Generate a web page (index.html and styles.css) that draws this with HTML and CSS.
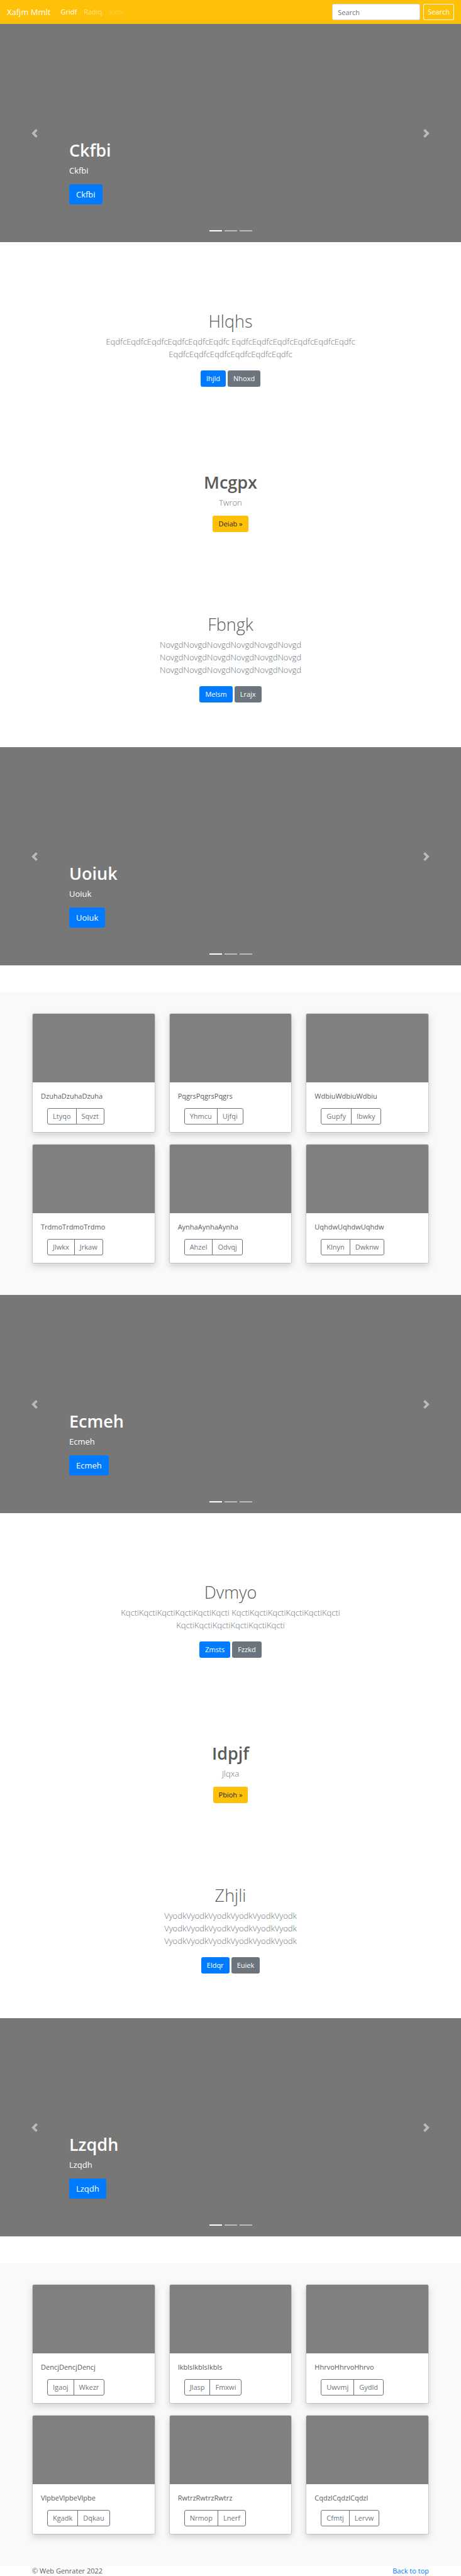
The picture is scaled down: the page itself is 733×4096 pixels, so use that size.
FILE: index.html
```html
<!DOCTYPE html>
<html lang="en">
<head>
<meta charset="utf-8">
<meta name="viewport" content="width=device-width, initial-scale=1">
<title>Xafjm Mmlt</title>
<link rel="stylesheet" href="styles.css">
</head>
<body id="top">
<header class="navbar">
  <a class="brand" href="#">Xafjm Mmlt</a>
  <nav class="nav-links">
    <a class="nav-link active" href="#">Gridf</a>
    <a class="nav-link" href="#">Radlq</a>
    <a class="nav-link disabled" href="#">Xielv</a>
  </nav>
  <form class="search">
    <input class="search-input" type="text" placeholder="Search" aria-label="Search">
    <button class="btn btn-outline-light" type="button">Search</button>
  </form>
</header>
<main>
  <section class="carousel">
    <button class="control prev" type="button" aria-label="Previous"><svg class="chevron" viewBox="0 0 8 8"><path d="M5.25 0l-4 4 4 4 1.5-1.5L4.250 4l2.500-2.500L5.250 0z"/></svg></button>
    <div class="caption"><h1 class="title strong">Ckfbi</h1><p class="caption-text">Ckfbi</p><a class="btn btn-lg btn-primary" href="#">Ckfbi</a></div>
    <button class="control next" type="button" aria-label="Next"><svg class="chevron" viewBox="0 0 8 8"><path d="M2.750 0l-1.500 1.500L3.750 4l-2.500 2.500L2.750 8l4-4-4-4z"/></svg></button>
    <div class="indicators"><span class="dash on"></span><span class="dash"></span><span class="dash"></span></div>
  </section>
  <section class="intro">
    <h2 class="title">Hlqhs</h2>
    <p class="lead">EqdfcEqdfcEqdfcEqdfcEqdfcEqdfc EqdfcEqdfcEqdfcEqdfcEqdfcEqdfc EqdfcEqdfcEqdfcEqdfcEqdfcEqdfc</p>
    <div class="actions"><a class="btn btn-primary" href="#">Ihjld</a><a class="btn btn-secondary" href="#">Nhoxd</a></div>
  </section>
  <section class="feature">
    <h2 class="title strong">Mcgpx</h2>
    <p class="lead">Twron</p>
    <div class="actions"><a class="btn btn-warning" href="#">Deiab »</a></div>
  </section>
  <section class="outro">
    <h2 class="title">Fbngk</h2>
    <p class="lead">NovgdNovgdNovgdNovgdNovgdNovgd<br>NovgdNovgdNovgdNovgdNovgdNovgd<br>NovgdNovgdNovgdNovgdNovgdNovgd</p>
    <div class="actions"><a class="btn btn-primary" href="#">Melsm</a><a class="btn btn-secondary" href="#">Lrajx</a></div>
  </section>
  <section class="carousel">
    <button class="control prev" type="button" aria-label="Previous"><svg class="chevron" viewBox="0 0 8 8"><path d="M5.25 0l-4 4 4 4 1.5-1.5L4.250 4l2.500-2.500L5.250 0z"/></svg></button>
    <div class="caption"><h1 class="title strong">Uoiuk</h1><p class="caption-text">Uoiuk</p><a class="btn btn-lg btn-primary" href="#">Uoiuk</a></div>
    <button class="control next" type="button" aria-label="Next"><svg class="chevron" viewBox="0 0 8 8"><path d="M2.750 0l-1.500 1.500L3.750 4l-2.500 2.500L2.750 8l4-4-4-4z"/></svg></button>
    <div class="indicators"><span class="dash on"></span><span class="dash"></span><span class="dash"></span></div>
  </section>
  <section class="album">
    <article class="card"><div class="thumb"></div><div class="card-body"><p class="card-text">DzuhaDzuhaDzuha</p><div class="group"><button class="btn btn-outline" type="button">Ltyqo</button><button class="btn btn-outline" type="button">Sqvzt</button></div></div></article>
    <article class="card"><div class="thumb"></div><div class="card-body"><p class="card-text">PqgrsPqgrsPqgrs</p><div class="group"><button class="btn btn-outline" type="button">Yhmcu</button><button class="btn btn-outline" type="button">Ujfqi</button></div></div></article>
    <article class="card"><div class="thumb"></div><div class="card-body"><p class="card-text">WdbiuWdbiuWdbiu</p><div class="group"><button class="btn btn-outline" type="button">Gupfy</button><button class="btn btn-outline" type="button">Ibwky</button></div></div></article>
    <article class="card"><div class="thumb"></div><div class="card-body"><p class="card-text">TrdmoTrdmoTrdmo</p><div class="group"><button class="btn btn-outline" type="button">Jlwkx</button><button class="btn btn-outline" type="button">Jrkaw</button></div></div></article>
    <article class="card"><div class="thumb"></div><div class="card-body"><p class="card-text">AynhaAynhaAynha</p><div class="group"><button class="btn btn-outline" type="button">Ahzel</button><button class="btn btn-outline" type="button">Odvqj</button></div></div></article>
    <article class="card"><div class="thumb"></div><div class="card-body"><p class="card-text">UqhdwUqhdwUqhdw</p><div class="group"><button class="btn btn-outline" type="button">Klnyn</button><button class="btn btn-outline" type="button">Dwknw</button></div></div></article>
  </section>
  <section class="carousel">
    <button class="control prev" type="button" aria-label="Previous"><svg class="chevron" viewBox="0 0 8 8"><path d="M5.25 0l-4 4 4 4 1.5-1.5L4.250 4l2.500-2.500L5.250 0z"/></svg></button>
    <div class="caption"><h1 class="title strong">Ecmeh</h1><p class="caption-text">Ecmeh</p><a class="btn btn-lg btn-primary" href="#">Ecmeh</a></div>
    <button class="control next" type="button" aria-label="Next"><svg class="chevron" viewBox="0 0 8 8"><path d="M2.750 0l-1.500 1.500L3.750 4l-2.500 2.500L2.750 8l4-4-4-4z"/></svg></button>
    <div class="indicators"><span class="dash on"></span><span class="dash"></span><span class="dash"></span></div>
  </section>
  <section class="intro">
    <h2 class="title">Dvmyo</h2>
    <p class="lead">KqctiKqctiKqctiKqctiKqctiKqcti KqctiKqctiKqctiKqctiKqctiKqcti KqctiKqctiKqctiKqctiKqctiKqcti</p>
    <div class="actions"><a class="btn btn-primary" href="#">Zmsts</a><a class="btn btn-secondary" href="#">Fzzkd</a></div>
  </section>
  <section class="feature">
    <h2 class="title strong">Idpjf</h2>
    <p class="lead">Jlqxa</p>
    <div class="actions"><a class="btn btn-warning" href="#">Pbioh »</a></div>
  </section>
  <section class="outro">
    <h2 class="title">Zhjli</h2>
    <p class="lead">VyodkVyodkVyodkVyodkVyodkVyodk<br>VyodkVyodkVyodkVyodkVyodkVyodk<br>VyodkVyodkVyodkVyodkVyodkVyodk</p>
    <div class="actions"><a class="btn btn-primary" href="#">Eldqr</a><a class="btn btn-secondary" href="#">Euiek</a></div>
  </section>
  <section class="carousel">
    <button class="control prev" type="button" aria-label="Previous"><svg class="chevron" viewBox="0 0 8 8"><path d="M5.25 0l-4 4 4 4 1.5-1.5L4.250 4l2.500-2.500L5.250 0z"/></svg></button>
    <div class="caption"><h1 class="title strong">Lzqdh</h1><p class="caption-text">Lzqdh</p><a class="btn btn-lg btn-primary" href="#">Lzqdh</a></div>
    <button class="control next" type="button" aria-label="Next"><svg class="chevron" viewBox="0 0 8 8"><path d="M2.750 0l-1.500 1.500L3.750 4l-2.500 2.500L2.750 8l4-4-4-4z"/></svg></button>
    <div class="indicators"><span class="dash on"></span><span class="dash"></span><span class="dash"></span></div>
  </section>
  <section class="album">
    <article class="card"><div class="thumb"></div><div class="card-body"><p class="card-text">DencjDencjDencj</p><div class="group"><button class="btn btn-outline" type="button">Igaoj</button><button class="btn btn-outline" type="button">Wkezr</button></div></div></article>
    <article class="card"><div class="thumb"></div><div class="card-body"><p class="card-text">IkblsIkblsIkbls</p><div class="group"><button class="btn btn-outline" type="button">Jlasp</button><button class="btn btn-outline" type="button">Fmxwi</button></div></div></article>
    <article class="card"><div class="thumb"></div><div class="card-body"><p class="card-text">HhrvoHhrvoHhrvo</p><div class="group"><button class="btn btn-outline" type="button">Uwvmj</button><button class="btn btn-outline" type="button">Gydld</button></div></div></article>
    <article class="card"><div class="thumb"></div><div class="card-body"><p class="card-text">VlpbeVlpbeVlpbe</p><div class="group"><button class="btn btn-outline" type="button">Kgadk</button><button class="btn btn-outline" type="button">Dqkau</button></div></div></article>
    <article class="card"><div class="thumb"></div><div class="card-body"><p class="card-text">RwtrzRwtrzRwtrz</p><div class="group"><button class="btn btn-outline" type="button">Nrmop</button><button class="btn btn-outline" type="button">Lnerf</button></div></div></article>
    <article class="card"><div class="thumb"></div><div class="card-body"><p class="card-text">CqdzlCqdzlCqdzl</p><div class="group"><button class="btn btn-outline" type="button">Cfmtj</button><button class="btn btn-outline" type="button">Lervw</button></div></div></article>
  </section>
</main>
<footer class="footer"><span>© Web Genrater 2022</span><a class="top-link" href="#top">Back to top</a></footer>
</body>
</html>
```
FILE: styles.css
```css
* { box-sizing: border-box; }

body {
  margin: 0;
  background: #fff;
  color: #5a5a5a;
  font-family: "Open Sans", "Noto Sans", sans-serif;
  font-size: 11px;
  line-height: 16px;
}

h1, h2, p { margin: 0; }
a { text-decoration: none; }

.navbar {
  display: flex;
  align-items: center;
  padding: 6px 11px;
  background: #ffc107;
}

.brand {
  margin-right: 16px;
  color: #fff;
  font-size: 13px;
  line-height: 20px;
}

.nav-links { display: flex; gap: 11px; }
.nav-link { color: rgba(255, 255, 255, .5); }
.nav-link.active { color: #fff; }
.nav-link.disabled { color: rgba(255, 255, 255, .25); }

.search { display: flex; gap: 5px; margin-left: auto; }

.search-input {
  width: 140px;
  height: 26px;
  padding: 0 8px;
  border: 1px solid #ced4da;
  border-radius: 3px;
  background: #fff;
  color: #495057;
  font: inherit;
}
.search-input::placeholder { color: #6c757d; opacity: 1; }

.btn {
  display: inline-block;
  padding: 4px 8px;
  border: 1px solid transparent;
  border-radius: 3px;
  background: transparent;
  font-family: inherit;
  font-size: 11px;
  line-height: 16px;
  text-align: center;
}
.btn-outline-light { padding: 4px 6px; border-color: #fff; color: #fff; }
.btn-primary { background: #007bff; color: #fff; }
.btn-secondary { background: #6c757d; color: #fff; }
.btn-warning { background: #ffc107; color: #212529; }
.btn-outline { border-color: #6c757d; color: #6c757d; }
.btn-lg { padding: 5px 10px; font-size: 13px; line-height: 20px; }

.title { font-size: 27px; font-weight: 300; line-height: 32px; }
.title.strong { font-weight: 600; }

.carousel {
  position: relative;
  display: grid;
  grid-template-columns: 15% 1fr 15%;
  height: 347px;
  background: #777;
  color: #fff;
}

.control {
  display: flex;
  align-items: center;
  justify-content: center;
  padding: 0;
  border: 0;
  background: none;
  opacity: .5;
}
.chevron { width: 14px; height: 14px; fill: #fff; }

.caption {
  display: flex;
  flex-direction: column;
  align-items: flex-start;
  justify-content: flex-end;
  padding-bottom: 60px;
}
.caption-text { margin: 6px 0 12px; font-size: 13px; line-height: 20px; }

.indicators {
  position: absolute;
  right: 0;
  bottom: 17px;
  left: 0;
  display: flex;
  justify-content: center;
  gap: 4px;
}
.dash { width: 20px; height: 2px; background: #fff; opacity: .5; }
.dash.on { opacity: 1; }

.intro, .feature, .outro { padding: 65px 20%; text-align: center; }
.intro { padding-top: 110px; }
.feature { padding-top: 71px; padding-bottom: 66px; }
.outro { padding-bottom: 71px; }

.lead {
  margin-top: 6px;
  color: #6c757d;
  font-size: 13px;
  font-weight: 300;
  line-height: 20px;
}
.actions { display: flex; justify-content: center; gap: 3px; margin-top: 16px; }
.feature .actions { margin-top: 11px; }

.album {
  display: grid;
  grid-template-columns: repeat(3, 1fr);
  gap: 18px 22px;
  margin-top: 43px;
  padding: 33px 51px 50px;
  background: #f8f9fa;
}

.card {
  overflow: hidden;
  border: 1px solid rgba(0, 0, 0, .125);
  border-radius: 3px;
  background: #fff;
  background-clip: padding-box;
  box-shadow: 0 5px 11px rgba(0, 0, 0, .15);
}
.thumb { height: 109px; background: #808080; }
.card-body { padding: 14px 13px 12px; }
.group { display: flex; margin: 11px 0 0 10px; }
.group .btn:first-child { border-radius: 3px 0 0 3px; }
.group .btn:last-child { margin-left: -1px; border-radius: 0 3px 3px 0; }

.footer { display: flex; justify-content: space-between; padding: 0 51px; }
.top-link { color: #007bff; }
```
